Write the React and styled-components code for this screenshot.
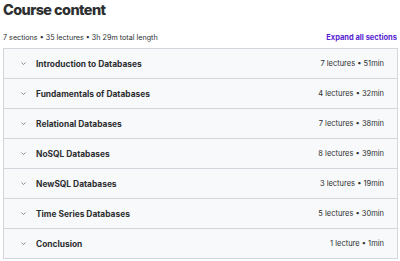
import React from 'react';
import styled, { createGlobalStyle } from 'styled-components';

const GlobalStyle = createGlobalStyle`
  body {
    margin: 0;
    background: #ffffff;
    font-family: Inter, "Noto Sans", sans-serif;
    color: #2d2f31;
  }
`;

const sections = [
  { title: 'Introduction to Databases', meta: '7 lectures • 51min' },
  { title: 'Fundamentals of Databases', meta: '4 lectures • 32min' },
  { title: 'Relational Databases', meta: '7 lectures • 38min' },
  { title: 'NoSQL Databases', meta: '8 lectures • 39min' },
  { title: 'NewSQL Databases', meta: '3 lectures • 19min' },
  { title: 'Time Series Databases', meta: '5 lectures • 30min' },
  { title: 'Conclusion', meta: '1 lecture • 1min' },
];

const Chevron = () => (
  <svg width="7" height="7" viewBox="0 0 10 10" fill="none">
    <path d="M2.5 4 L5 6.5 L7.5 4" stroke="#6a6f73" strokeWidth="1.1" strokeLinecap="round" strokeLinejoin="round" />
  </svg>
);

const App = () => {
  return (
    <Page>
      <GlobalStyle />
      <Title>Course content</Title>
      <SummaryBar>
        <Summary>7 sections • 35 lectures • 3h 29m total length</Summary>
        <ExpandLink>Expand all sections</ExpandLink>
      </SummaryBar>
      <SectionList>
        {sections.map(s => (
          <SectionRow key={s.title}>
            <Icon>
              <Chevron />
            </Icon>
            <SectionTitle>{s.title}</SectionTitle>
            <SectionMeta>{s.meta}</SectionMeta>
          </SectionRow>
        ))}
      </SectionList>
    </Page>
  );
};

export default App;

const Page = styled.div`
  width: 395px;
  padding: 0 2px 0 3px;
`;

const Title = styled.h2`
  margin: 0;
  padding-top: 1px;
  font-size: 14.5px;
  line-height: 18px;
  font-weight: 800;
  letter-spacing: -0.6px;
`;

const SummaryBar = styled.div`
  display: flex;
  align-items: center;
  justify-content: space-between;
  margin-top: 9px;
  height: 18px;
  padding-bottom: 2px;
`;

const Summary = styled.span`
  font-size: 7.2px;
  color: #2d2f31;
`;

const ExpandLink = styled.span`
  font-size: 7.5px;
  font-weight: 700;
  color: #5624d0;
  margin-right: 1px;
`;

const SectionList = styled.div`
  border: 1px solid #d1d7dc;
  border-bottom: none;
`;

const SectionRow = styled.div`
  display: flex;
  align-items: center;
  height: 29px;
  padding: 0 13px 0 16px;
  background: #f7f9fa;
  border-bottom: 1px solid #d1d7dc;
`;

const Icon = styled.span`
  display: flex;
  width: 16px;
  align-items: center;
`;

const SectionTitle = styled.span`
  flex: 1;
  font-size: 8.4px;
  font-weight: 700;
  color: #2d2f31;
`;

const SectionMeta = styled.span`
  font-size: 7.5px;
  color: #2d2f31;
`;
